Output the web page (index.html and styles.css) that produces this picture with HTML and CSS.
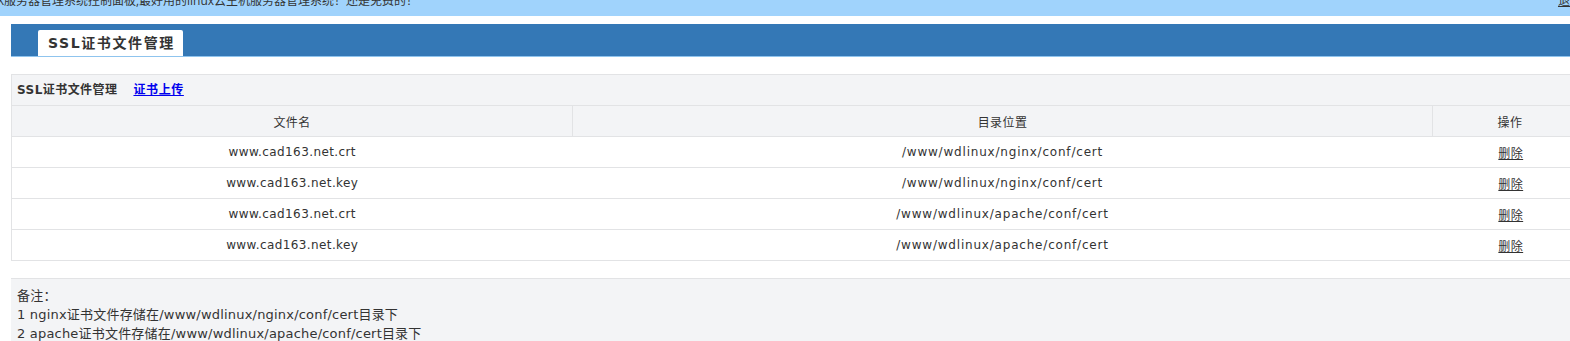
FILE: index.html
```html
<!DOCTYPE html>
<html lang="zh-CN">
<head>
    <meta charset="UTF-8">
    <title>SSL证书文件管理</title>
    <link rel="stylesheet" href="styles.css">
</head>
<body>
    <div class="frame">
        <div class="topbar">
            <span class="notice">X服务器管理系统控制面板,最好用的linux云主机服务器管理系统！还是免费的！</span>
            <a class="logout" href="#">退出</a>
        </div>

        <div class="tabbar">
            <div class="tab">SSL证书文件管理</div>
        </div>

        <div class="box">
            <div class="box-title">
                <b>SSL证书文件管理</b>
                <a class="upload" href="#">证书上传</a>
            </div>
            <table class="list">
                <tr class="head">
                    <td class="c1">文件名</td>
                    <td class="c2">目录位置</td>
                    <td class="c3">操作</td>
                </tr>
                <tr>
                    <td>www.cad163.net.crt</td>
                    <td class="path">/www/wdlinux/nginx/conf/cert</td>
                    <td><a href="#">删除</a></td>
                </tr>
                <tr>
                    <td>www.cad163.net.key</td>
                    <td class="path">/www/wdlinux/nginx/conf/cert</td>
                    <td><a href="#">删除</a></td>
                </tr>
                <tr>
                    <td>www.cad163.net.crt</td>
                    <td class="path">/www/wdlinux/apache/conf/cert</td>
                    <td><a href="#">删除</a></td>
                </tr>
                <tr>
                    <td>www.cad163.net.key</td>
                    <td class="path">/www/wdlinux/apache/conf/cert</td>
                    <td><a href="#">删除</a></td>
                </tr>
            </table>
        </div>

        <div class="notes">
            <p>备注：</p>
            <p>1 nginx证书文件存储在/www/wdlinux/nginx/conf/cert目录下</p>
            <p>2 apache证书文件存储在/www/wdlinux/apache/conf/cert目录下</p>
        </div>
    </div>
</body>
</html>
```

FILE: styles.css
```css
*{
    margin: 0;
    padding: 0;
}
body{
    overflow: hidden;
    font-family: "DejaVu Sans", "Noto Sans CJK SC", sans-serif;
    font-size: 12px;
    color: #333;
    background: #fff;
}
.frame{
    width: 1600px;
}
.topbar{
    height: 16px;
    background: #a0d3fc;
    display: flex;
    overflow: hidden;
    padding-right: 18px;
    font-family: "Open Sans", "Noto Sans CJK SC", sans-serif;
}
.notice{
    display: block;
    margin-left: -3px;
    margin-top: -7px;
    line-height: 16px;
    font-size: 12px;
    color: #333;
    white-space: nowrap;
}
.logout{
    margin-left: auto;
    margin-top: -7px;
    line-height: 16px;
    color: #333;
}
.tabbar{
    margin: 8px 0 0 11px;
    height: 32px;
    background: #3478b6;
    border-bottom: 1px solid #8fc4ee;
    display: flex;
    align-items: flex-end;
}
.tab{
    margin-left: 27px;
    height: 26px;
    line-height: 27px;
    padding: 0 8px 0 10px;
    background: #fff;
    border-radius: 2px 2px 0 0;
    font-size: 14px;
    font-weight: bold;
    letter-spacing: 1.6px;
    color: #333;
}
.box{
    margin: 17px 0 0 11px;
    width: 1573px;
    background: #f3f4f6;
    border-top: 1px solid #e2e3e5;
    border-left: 1px solid #e2e3e5;
}
.box-title{
    height: 30px;
    line-height: 30px;
    padding-left: 5px;
    display: flex;
    gap: 16px;
}
.box-title b{
    font-size: 12px;
    letter-spacing: 0.45px;
}
.upload{
    color: #0000ee;
    font-weight: bold;
    font-size: 12px;
    letter-spacing: 0.6px;
}
.list{
    width: 100%;
    border-collapse: collapse;
}
.list td{
    height: 30px;
    text-align: center;
    border-top: 1px solid #e2e3e5;
    border-bottom: 1px solid #e2e3e5;
    background: #fff;
    padding: 0;
    letter-spacing: 0.4px;
}
.list .head td{
    background: #f3f4f6;
}
.list .c1{
    width: 560px;
    border-right: 1px solid #e2e3e5;
}
.list .c2{
    width: 859px;
    border-right: 1px solid #e2e3e5;
}
.list .c3{
    padding-left: 2px;
}
.list .path{
    letter-spacing: 0.8px;
}
.list a{
    color: #333;
    margin-left: 4px;
}
.notes{
    margin: 17px 0 0 11px;
    width: 1573px;
    background: #f3f4f6;
    border-top: 1px solid #e2e3e5;
    padding: 7px 6px 10px;
    font-size: 13px;
    letter-spacing: 0.2px;
}
.notes p{
    line-height: 19px;
}
```
